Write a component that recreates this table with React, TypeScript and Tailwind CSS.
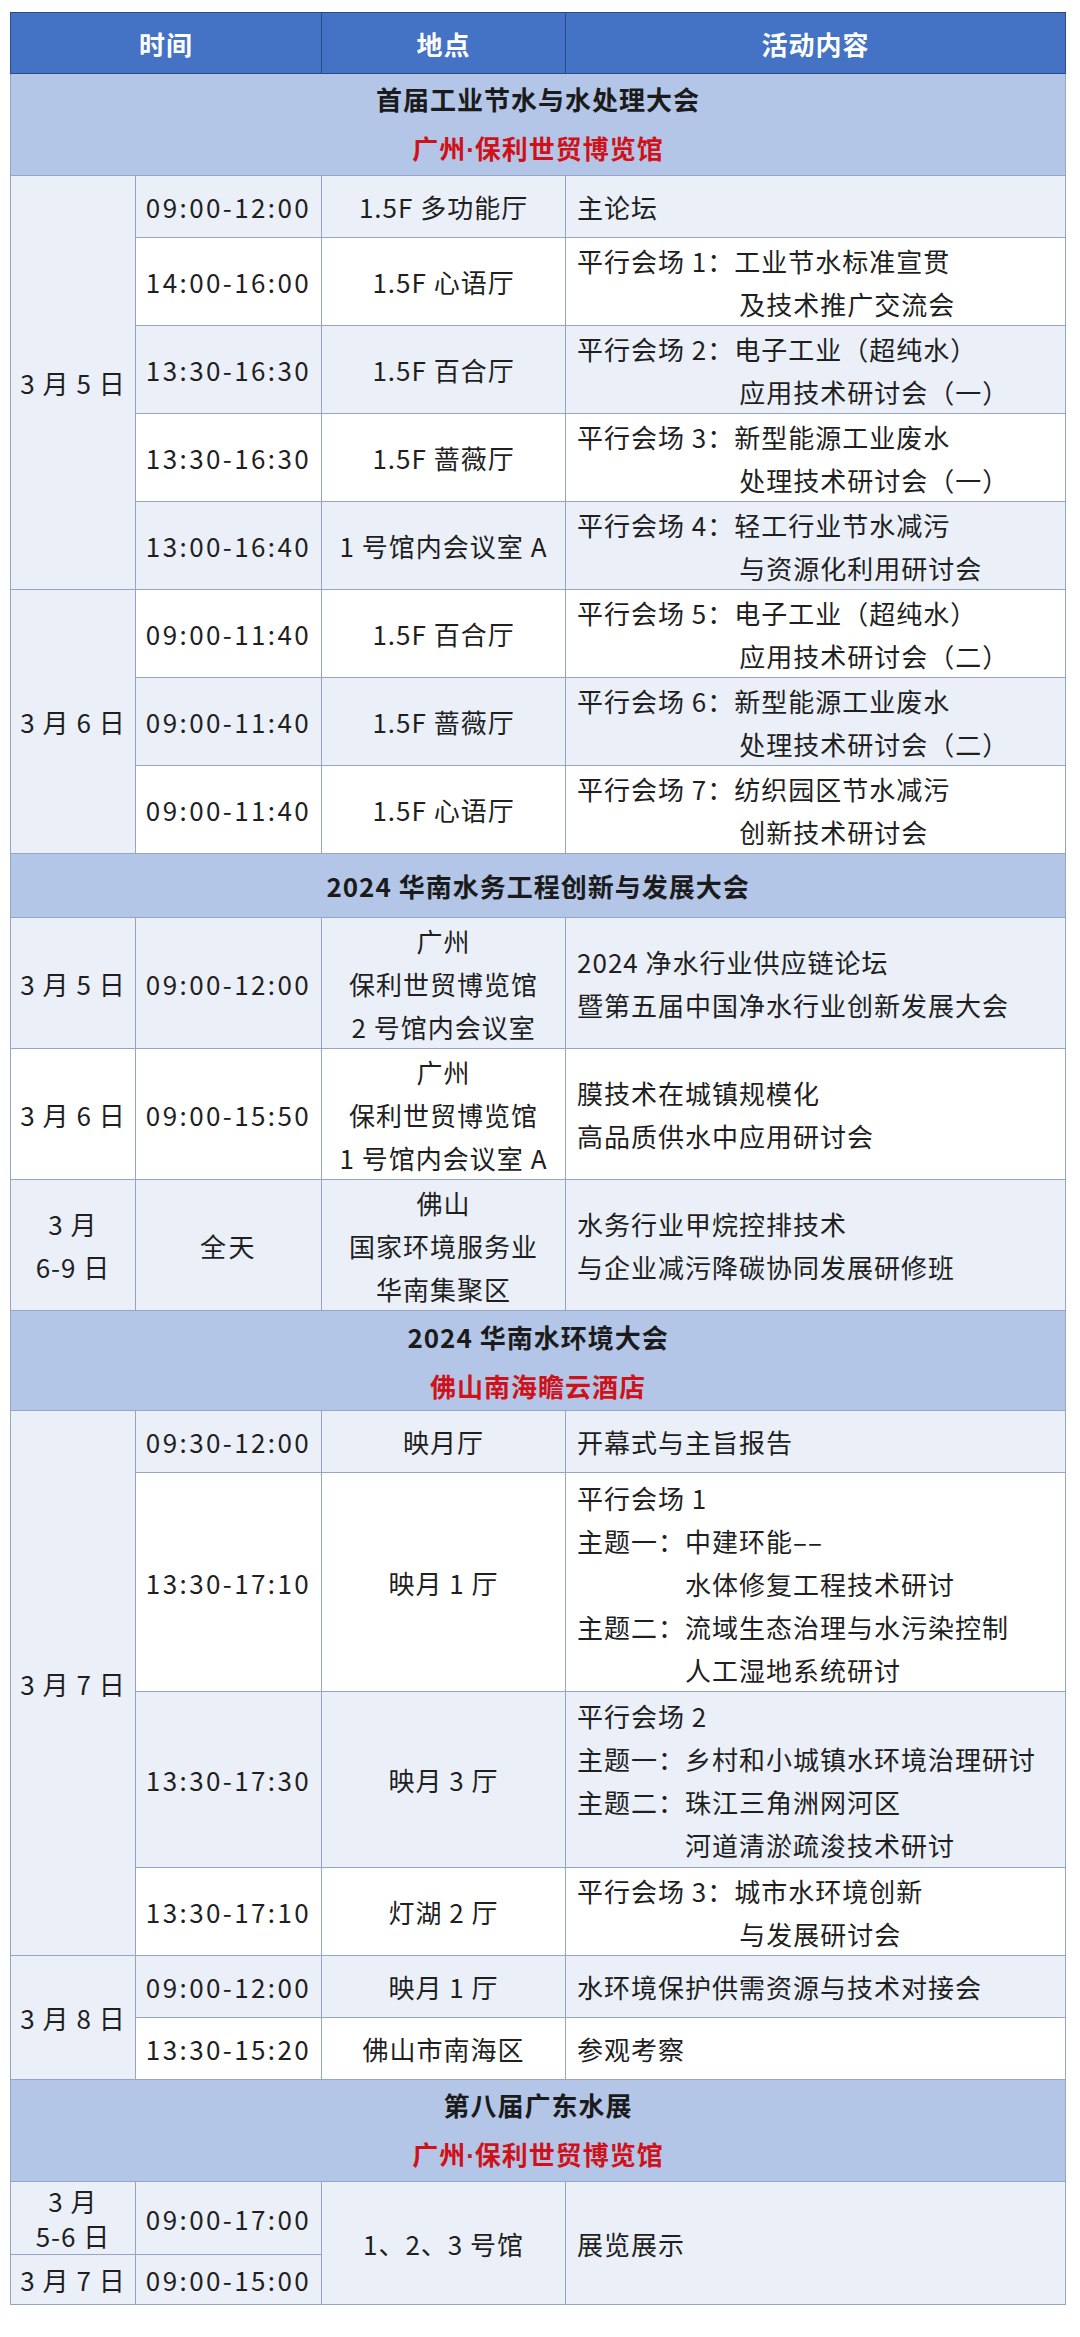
import type { ReactNode } from 'react';

const font = "font-['Noto_Sans_CJK_SC',sans-serif]";
const cell = 'border border-[#93a6c6] align-middle';
const light = 'bg-[#ebf0f8]';
const white = 'bg-white';

function Session({ label, lines, shift = true }: { label: string; lines: string[]; shift?: boolean }) {
  return (
    <div className="flex">
      <span className="shrink-0 whitespace-pre">{label}</span>
      <div>
        {lines.map((l, i) => (
          <div key={i} className={i > 0 && shift ? 'pl-[5px]' : ''}>
            {l}
          </div>
        ))}
      </div>
    </div>
  );
}

function Lines({ lines }: { lines: string[] }) {
  return (
    <>
      {lines.map((l) => (
        <div key={l}>{l}</div>
      ))}
    </>
  );
}

function Row({
  h,
  bg,
  date,
  time,
  place,
  content,
}: {
  h: string;
  bg: string;
  date?: { node: ReactNode; span: number; bg: string };
  time: string;
  place?: ReactNode;
  content?: ReactNode;
}) {
  return (
    <tr className={h}>
      {date && (
        <td rowSpan={date.span} className={`${cell} ${date.bg} text-center`}>
          {date.node}
        </td>
      )}
      <td className={`${cell} ${bg} text-center tracking-[2.4px]`}>{time}</td>
      {place !== undefined && <td className={`${cell} ${bg} text-center`}>{place}</td>}
      {content !== undefined && <td className={`${cell} ${bg} pl-[11px] text-left`}>{content}</td>}
    </tr>
  );
}

function SectionHead({ title, venue, h }: { title: string; venue?: ReactNode; h: string }) {
  return (
    <tr className={h}>
      <td colSpan={4} className={`${cell} bg-[#b4c6e7] text-center font-bold`}>
        <div className="leading-[49px] text-[#1b1b1b]">{title}</div>
        {venue && <div className="leading-[49px] text-[#cf1219]">{venue}</div>}
      </td>
    </tr>
  );
}

// 广州·保利世贸博览馆 with a narrow middle dot
const polyVenue = (
  <>
    广州<span className="font-['Liberation_Sans',sans-serif] tracking-normal">·</span>保利世贸博览馆
  </>
);

export default function App() {
  return (
    <div className={`min-h-[2337px] bg-white pl-[10px] pt-[12px] ${font} text-[26px] leading-[43px] tracking-[1px] text-[#1f1f1f]`}>
      <table className="w-[1055px] table-fixed border-collapse">
        <colgroup>
          <col className="w-[125px]" />
          <col className="w-[186px]" />
          <col className="w-[244px]" />
          <col className="w-[500px]" />
        </colgroup>
        <thead>
          <tr className="h-[61px] bg-[#4472c4] font-bold text-white">
            <th colSpan={2} className="border border-[#2d4a85] align-middle">时间</th>
            <th className="border border-[#2d4a85] align-middle">地点</th>
            <th className="border border-[#2d4a85] align-middle">活动内容</th>
          </tr>
        </thead>
        <tbody>
          {/* 首届工业节水与水处理大会 */}
          <SectionHead h="h-[100px]" title="首届工业节水与水处理大会" venue={polyVenue} />
          <Row h="h-[62px]" bg={light} date={{ node: '3 月 5 日', span: 5, bg: light }} time="09:00-12:00" place="1.5F 多功能厅" content="主论坛" />
          <Row h="h-[88px]" bg={white} time="14:00-16:00" place="1.5F 心语厅" content={<Session label="平行会场 1：" lines={['工业节水标准宣贯', '及技术推广交流会']} />} />
          <Row h="h-[88px]" bg={light} time="13:30-16:30" place="1.5F 百合厅" content={<Session label="平行会场 2：" lines={['电子工业（超纯水）', '应用技术研讨会（一）']} />} />
          <Row h="h-[88px]" bg={white} time="13:30-16:30" place="1.5F 蔷薇厅" content={<Session label="平行会场 3：" lines={['新型能源工业废水', '处理技术研讨会（一）']} />} />
          <Row h="h-[88px]" bg={light} time="13:00-16:40" place="1 号馆内会议室 A" content={<Session label="平行会场 4：" lines={['轻工行业节水减污', '与资源化利用研讨会']} />} />
          <Row h="h-[88px]" bg={white} date={{ node: '3 月 6 日', span: 3, bg: light }} time="09:00-11:40" place="1.5F 百合厅" content={<Session label="平行会场 5：" lines={['电子工业（超纯水）', '应用技术研讨会（二）']} />} />
          <Row h="h-[88px]" bg={light} time="09:00-11:40" place="1.5F 蔷薇厅" content={<Session label="平行会场 6：" lines={['新型能源工业废水', '处理技术研讨会（二）']} />} />
          <Row h="h-[88px]" bg={white} time="09:00-11:40" place="1.5F 心语厅" content={<Session label="平行会场 7：" lines={['纺织园区节水减污', '创新技术研讨会']} />} />

          {/* 2024 华南水务工程创新与发展大会 */}
          <SectionHead h="h-[64px]" title="2024 华南水务工程创新与发展大会" />
          <Row h="h-[131px]" bg={light} date={{ node: '3 月 5 日', span: 1, bg: light }} time="09:00-12:00" place={<Lines lines={['广州', '保利世贸博览馆', '2 号馆内会议室']} />} content={<Lines lines={['2024 净水行业供应链论坛', '暨第五届中国净水行业创新发展大会']} />} />
          <Row h="h-[131px]" bg={white} date={{ node: '3 月 6 日', span: 1, bg: white }} time="09:00-15:50" place={<Lines lines={['广州', '保利世贸博览馆', '1 号馆内会议室 A']} />} content={<Lines lines={['膜技术在城镇规模化', '高品质供水中应用研讨会']} />} />
          <Row h="h-[131px]" bg={light} date={{ node: <Lines lines={['3 月', '6-9 日']} />, span: 1, bg: light }} time="全天" place={<Lines lines={['佛山', '国家环境服务业', '华南集聚区']} />} content={<Lines lines={['水务行业甲烷控排技术', '与企业减污降碳协同发展研修班']} />} />

          {/* 2024 华南水环境大会 */}
          <SectionHead h="h-[100px]" title="2024 华南水环境大会" venue="佛山南海瞻云酒店" />
          <Row h="h-[62px]" bg={light} date={{ node: '3 月 7 日', span: 4, bg: light }} time="09:30-12:00" place="映月厅" content="开幕式与主旨报告" />
          <Row
            h="h-[218px]"
            bg={white}
            time="13:30-17:10"
            place="映月 1 厅"
            content={
              <div className="pt-[3px]">
                <div>平行会场 1</div>
                <Session shift={false} label="主题一：" lines={['中建环能––', '水体修复工程技术研讨']} />
                <Session shift={false} label="主题二：" lines={['流域生态治理与水污染控制', '人工湿地系统研讨']} />
              </div>
            }
          />
          <Row
            h="h-[176px]"
            bg={light}
            time="13:30-17:30"
            place="映月 3 厅"
            content={
              <div>
                <div>平行会场 2</div>
                <Session shift={false} label="主题一：" lines={['乡村和小城镇水环境治理研讨']} />
                <Session shift={false} label="主题二：" lines={['珠江三角洲网河区', '河道清淤疏浚技术研讨']} />
              </div>
            }
          />
          <Row h="h-[88px]" bg={white} time="13:30-17:10" place="灯湖 2 厅" content={<Session label="平行会场 3：" lines={['城市水环境创新', '与发展研讨会']} />} />
          <Row h="h-[62px]" bg={light} date={{ node: '3 月 8 日', span: 2, bg: light }} time="09:00-12:00" place="映月 1 厅" content="水环境保护供需资源与技术对接会" />
          <Row h="h-[62px]" bg={white} time="13:30-15:20" place="佛山市南海区" content="参观考察" />

          {/* 第八届广东水展 */}
          <SectionHead h="h-[98px]" title="第八届广东水展" venue={polyVenue} />
          <tr className="h-[73px]">
            <td className={`${cell} ${light} text-center leading-[35px]`}>
              <div>3 月</div>
              <div>5-6 日</div>
            </td>
            <td className={`${cell} ${light} text-center tracking-[2.4px]`}>09:00-17:00</td>
            <td rowSpan={2} className={`${cell} ${light} text-center`}>1、2、3 号馆</td>
            <td rowSpan={2} className={`${cell} ${light} pl-[11px] text-left`}>展览展示</td>
          </tr>
          <tr className="h-[50px]">
            <td className={`${cell} ${light} text-center leading-[35px]`}>3 月 7 日</td>
            <td className={`${cell} ${light} text-center leading-[35px] tracking-[2.4px]`}>09:00-15:00</td>
          </tr>
        </tbody>
      </table>
    </div>
  );
}
